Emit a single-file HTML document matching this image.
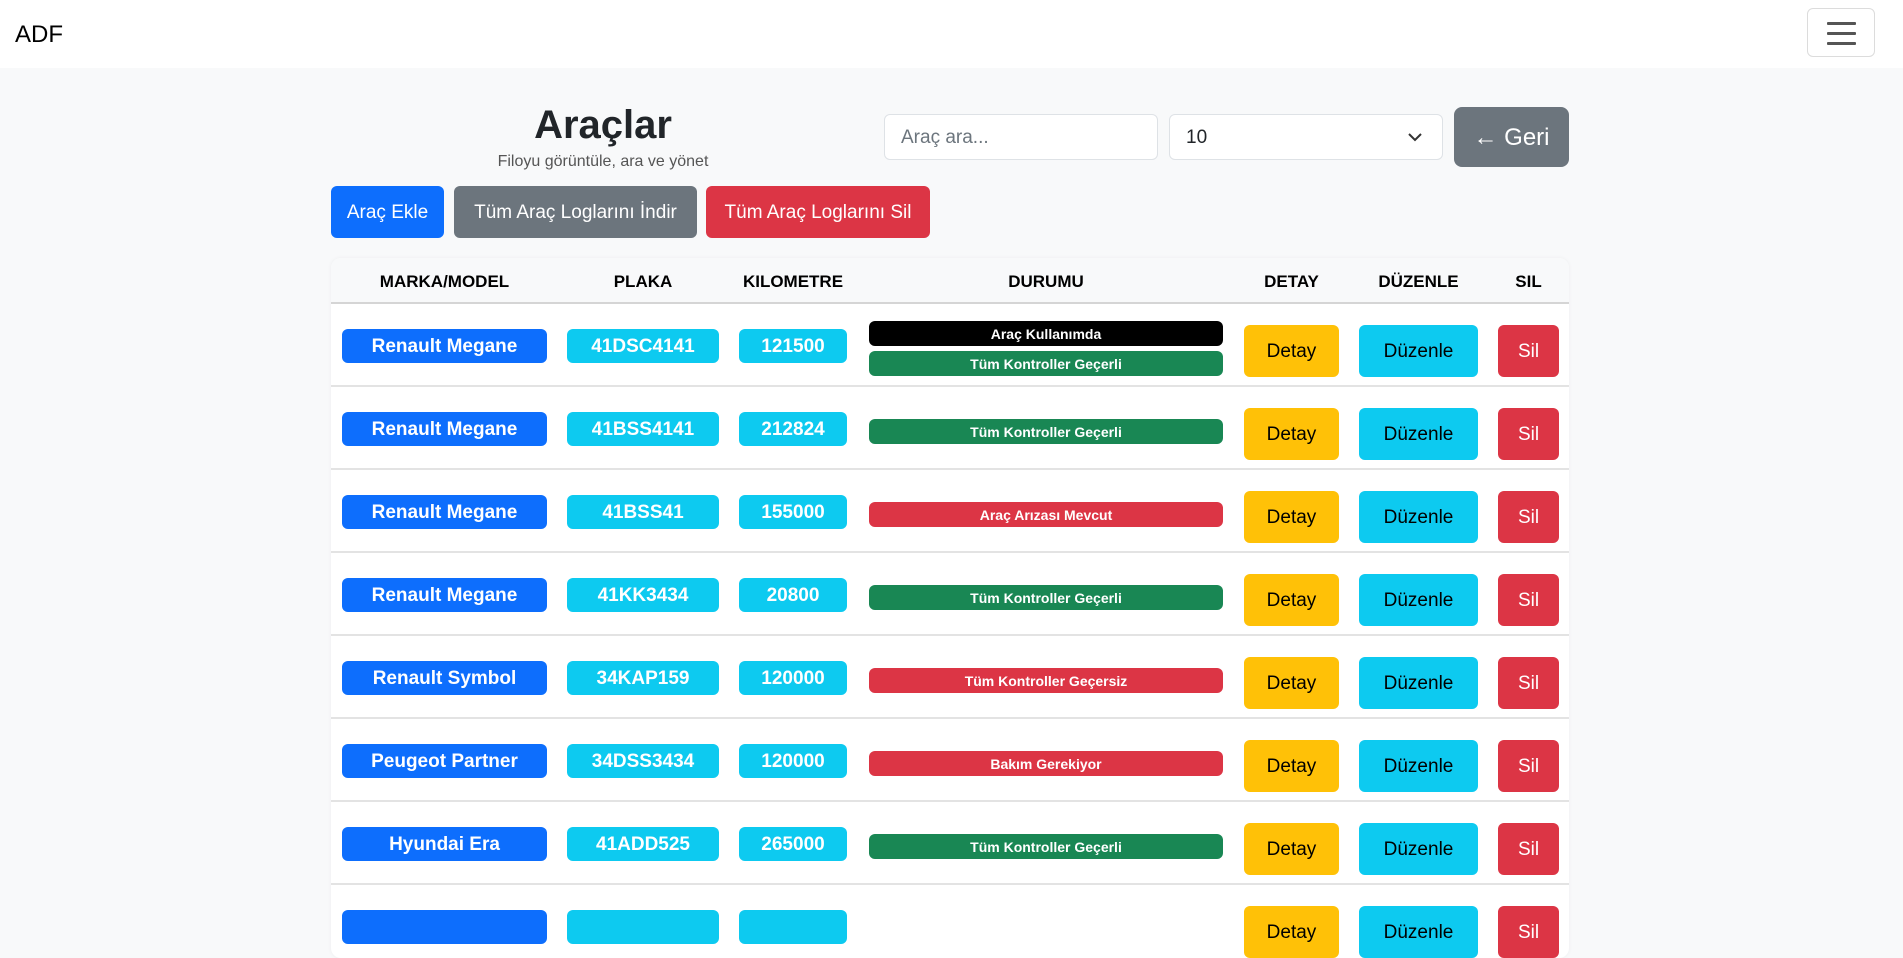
<!DOCTYPE html>
<html><head><meta charset="utf-8"><style>
*{box-sizing:border-box;margin:0;padding:0}
body{width:1903px;height:917px;overflow:hidden;background:#f8f9fa;font-family:"Liberation Sans",sans-serif;color:#212529;position:relative}
.nav{position:absolute;left:0;top:0;width:1903px;height:68px;background:#fff}
.brand{position:absolute;left:15px;top:21px;font-size:24px;color:#000}
.ham{position:absolute;left:1807px;top:8px;width:68px;height:49px;border:1px solid #dcdcdc;border-radius:6px}
.ham i{position:absolute;left:19px;width:29px;height:3px;background:#555;border-radius:1px}
.abs{position:absolute}
.t1{left:503px;width:200px;top:103px;text-align:center;font-size:40px;font-weight:bold}
.t2{left:453px;width:300px;top:153px;text-align:center;font-size:16px;color:#555}
.inp{background:#fff;border:1px solid #dee2e6;border-radius:6px;font-size:19px;padding-left:16px;line-height:46px}
.btn{border-radius:6px;color:#fff;font-size:19px;text-align:center}
.table{left:331px;top:258px;width:1238px;height:700px;background:#fff;border-radius:10px;overflow:hidden;box-shadow:0 0 4px rgba(0,0,0,.05)}
.th{position:absolute;top:0;left:0;width:1238px;height:46px;background:#f8f9fa;border-bottom:2px solid #d5d5d5}
.th span{position:absolute;top:14px;font-size:17px;font-weight:bold;color:#000;text-align:center}
.row{position:absolute;left:0;width:1238px;height:83px;border-bottom:2px solid #e3e3e3}
.b{position:absolute;top:25px;height:34px;line-height:36px;border-radius:6px;color:#fff;font-weight:bold;font-size:19px;text-align:center}
.s{position:absolute;left:538px;width:354px;height:25px;line-height:26px;border-radius:6px;color:#fff;font-weight:bold;font-size:14px;text-align:center}
.k{position:absolute;top:21px;height:52px;line-height:54px;border-radius:6px;font-size:19px;text-align:center}
</style></head><body>
<div class="nav"><div class="brand">ADF</div><div class="ham"><i style="top:13px"></i><i style="top:23px"></i><i style="top:33px"></i></div></div>
<div class="abs t1">Araçlar</div>
<div class="abs t2">Filoyu görüntüle, ara ve yönet</div>
<div class="abs inp" style="left:884px;top:114px;width:274px;height:46px;color:#6c757d">Araç ara...</div>
<div class="abs inp" style="left:1169px;top:114px;width:274px;height:46px;color:#212529">10<svg style="position:absolute;right:20px;top:18px" width="14" height="9" viewBox="0 0 14 9"><path d="M1 1l6 6 6-6" fill="none" stroke="#333" stroke-width="2"/></svg></div>
<div class="abs btn" style="left:1454px;top:107px;width:115px;height:60px;line-height:62px;background:#6c757d;font-size:24px;border-radius:8px">← Geri</div>
<div class="abs btn" style="left:331px;top:186px;width:113px;height:52px;line-height:54px;background:#0d6efd">Araç Ekle</div>
<div class="abs btn" style="left:454px;top:186px;width:243px;height:52px;line-height:54px;background:#6c757d">Tüm Araç Loglarını İndir</div>
<div class="abs btn" style="left:706px;top:186px;width:224px;height:52px;line-height:54px;background:#dc3545">Tüm Araç Loglarını Sil</div>
<div class="abs table">
<div class="th"><span style="left:11px;width:205px">MARKA/MODEL</span><span style="left:236px;width:152px">PLAKA</span><span style="left:408px;width:108px">KILOMETRE</span><span style="left:538px;width:354px">DURUMU</span><span style="left:913px;width:95px">DETAY</span><span style="left:1028px;width:119px">DÜZENLE</span><span style="left:1167px;width:61px">SIL</span></div>
</div>
<script>
var rows=[["Renault Megane","41DSC4141","121500",[["Araç Kullanımda","#000"],["Tüm Kontroller Geçerli","#198754"]]],
["Renault Megane","41BSS4141","212824",[["Tüm Kontroller Geçerli","#198754"]]],
["Renault Megane","41BSS41","155000",[["Araç Arızası Mevcut","#dc3545"]]],
["Renault Megane","41KK3434","20800",[["Tüm Kontroller Geçerli","#198754"]]],
["Renault Symbol","34KAP159","120000",[["Tüm Kontroller Geçersiz","#dc3545"]]],
["Peugeot Partner","34DSS3434","120000",[["Bakım Gerekiyor","#dc3545"]]],
["Hyundai Era","41ADD525","265000",[["Tüm Kontroller Geçerli","#198754"]]],
["","","",[]]];
var t=document.querySelector('.table'),h='';
rows.forEach(function(r,i){
h+='<div class="row" style="top:'+(46+i*83)+'px">';
h+='<div class="b" style="left:11px;width:205px;background:#0d6efd">'+r[0]+'</div>';
h+='<div class="b" style="left:236px;width:152px;background:#0dcaf0">'+r[1]+'</div>';
h+='<div class="b" style="left:408px;width:108px;background:#0dcaf0">'+r[2]+'</div>';
if(r[3].length==2){h+='<div class="s" style="top:17px;background:'+r[3][0][1]+'">'+r[3][0][0]+'</div><div class="s" style="top:47px;background:'+r[3][1][1]+'">'+r[3][1][0]+'</div>';}
else if(r[3].length==1){h+='<div class="s" style="top:32px;background:'+r[3][0][1]+'">'+r[3][0][0]+'</div>';}
h+='<div class="k" style="left:913px;width:95px;background:#ffc107;color:#000">Detay</div>';
h+='<div class="k" style="left:1028px;width:119px;background:#0dcaf0;color:#000">Düzenle</div>';
h+='<div class="k" style="left:1167px;width:61px;background:#dc3545;color:#fff">Sil</div>';
h+='</div>';});
t.insertAdjacentHTML('beforeend',h);
</script>
</body></html>
